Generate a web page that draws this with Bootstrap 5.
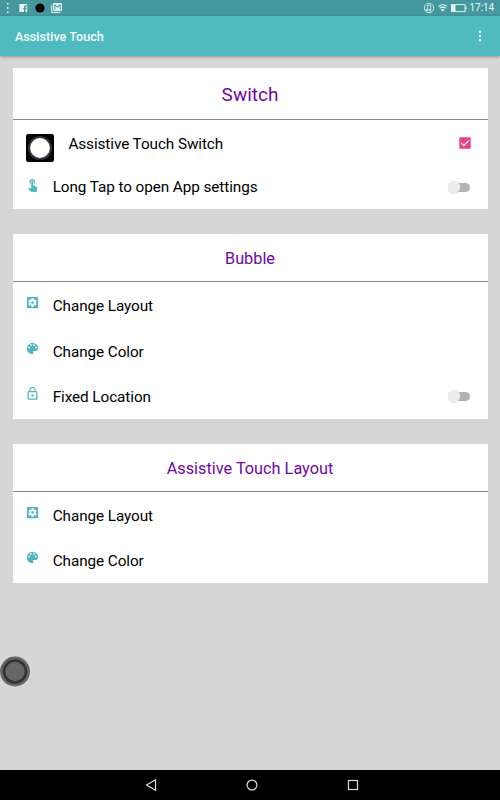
<!DOCTYPE html>
<html lang="en">
<head>
<meta charset="utf-8">
<meta name="viewport" content="width=device-width, initial-scale=1">
<title>Assistive Touch</title>
<link href="https://cdn.jsdelivr.net/npm/bootstrap@5.3.0/dist/css/bootstrap.min.css" rel="stylesheet">
<style>
body{font-family:Roboto,"Liberation Sans",sans-serif;background:#d6d6d6;height:800px;overflow:hidden;color:#111}
svg{display:block;flex:none}
.status{height:16px;background:#45999e;color:#e9f5f5;padding:0 5px 0 4px}
.clock{font-size:10px;line-height:16px;letter-spacing:-.1px;margin-right:1px}
.appbar{height:40px;background:#4fbbc1;color:#f4fbfb;padding:0 15px;box-shadow:0 1px 3px rgba(0,0,0,.3)}
.appbar h1{font-size:12.6px;font-weight:500;line-height:41px}
.panels{padding:12px 12.5px 0;gap:25px}
.panel{background:#fff}
.panel h2{height:48px;line-height:49px;font-size:16.3px;font-weight:400;color:#6f06a6;border-bottom:1px solid #8c8c8c;text-align:center}
.panel h2.big{height:52px;line-height:53px;font-size:19px}
.opt{height:45.5px;padding:0 17px 0 12.3px;font-size:15.3px;letter-spacing:-.08px;line-height:18px;color:#000}
.opt .ic{width:15px;height:15px;margin-top:13px;margin-right:12.9px;fill:#4fb6bc}
.opt .lbl{margin-top:15px}
.opt.first{height:46px}
.opt.first .lbl{margin-top:15px}
.opt.first .app{margin:14px 14.4px 0 1.2px}
.opt.tap{height:43px}
.opt.tap .ic{margin-top:10.5px}
.opt.tap .lbl{margin-top:12.3px}
.tick{margin:17px 0 0}
.tog{margin-top:15px}
.opt.tap .tog{margin-top:13px}
.bubble{left:0;top:656px}
.navkeys{height:30px;background:#000;padding-left:3px}
.navkeys .key{width:101px}
</style>
<script src="https://cdn.jsdelivr.net/npm/bootstrap@5.3.0/dist/js/bootstrap.bundle.min.js"></script>
</head>
<body class="d-flex flex-column position-relative m-0">
<svg width="0" height="0" class="position-absolute">
<symbol id="gear" viewBox="0 0 24 24"><path d="M12 10c-1.1 0-2 .9-2 2s.9 2 2 2 2-.9 2-2-.9-2-2-2zm7-7H5c-1.11 0-2 .9-2 2v14c0 1.1.89 2 2 2h14c1.11 0 2-.9 2-2V5c0-1.1-.89-2-2-2zm-1.75 9c0 .23-.02.46-.05.68l1.48 1.16c.13.11.17.3.08.45l-1.4 2.42c-.09.15-.27.21-.43.15l-1.74-.7c-.36.28-.76.51-1.18.69l-.26 1.85c-.03.17-.18.3-.35.3h-2.8c-.17 0-.32-.13-.35-.29l-.26-1.85c-.43-.18-.82-.41-1.18-.69l-1.74.7c-.16.06-.34 0-.43-.15l-1.4-2.42c-.09-.15-.05-.34.08-.45l1.48-1.16c-.03-.23-.05-.46-.05-.69 0-.23.02-.46.05-.68l-1.48-1.16c-.13-.11-.17-.3-.08-.45l1.4-2.42c.09-.15.27-.21.43-.15l1.74.7c.36-.28.76-.51 1.18-.69l.26-1.85c.03-.17.18-.3.35-.3h2.8c.17 0 .32.13.35.29l.26 1.85c.43.18.82.41 1.18.69l1.74-.7c.16-.06.34 0 .43.15l1.4 2.42c.09.15.05.34-.08.45l-1.48 1.16c.03.23.05.46.05.69z"/></symbol>
<symbol id="palette" viewBox="0 0 24 24"><path d="M12 3c-4.97 0-9 4.03-9 9s4.03 9 9 9c.83 0 1.5-.67 1.5-1.5 0-.39-.15-.74-.39-1.01-.23-.26-.38-.61-.38-.99 0-.83.67-1.5 1.5-1.5H16c2.76 0 5-2.24 5-5 0-4.42-4.03-8-9-8zm-5.5 9c-.83 0-1.5-.67-1.5-1.5S5.67 9 6.5 9 8 9.67 8 10.5 7.33 12 6.5 12zm3-4C8.67 8 8 7.33 8 6.5S8.67 5 9.5 5s1.5.67 1.5 1.5S10.33 8 9.5 8zm5 0c-.83 0-1.5-.67-1.5-1.5S13.67 5 14.5 5s1.5.67 1.5 1.5S15.33 8 14.5 8zm3 4c-.83 0-1.5-.67-1.5-1.5S16.67 9 17.5 9s1.5.67 1.5 1.5-.67 1.5-1.5 1.5z"/></symbol>
<symbol id="lock" viewBox="0 0 24 24"><path d="M12 17c1.1 0 2-.9 2-2s-.9-2-2-2-2 .9-2 2 .9 2 2 2zm6-9h-1V6c0-2.76-2.24-5-5-5S7 3.24 7 6v2H6c-1.1 0-2 .9-2 2v10c0 1.1.9 2 2 2h12c1.1 0 2-.9 2-2V10c0-1.1-.9-2-2-2zM8.9 6c0-1.71 1.39-3.1 3.1-3.1s3.1 1.39 3.1 3.1v2H8.9V6zM18 20H6V10h12v10z"/></symbol>
<symbol id="tap" viewBox="0 0 24 24"><path d="M9 11.24V7.5C9 6.12 10.12 5 11.5 5S14 6.12 14 7.5v3.74c1.21-.81 2-2.18 2-3.74C16 5.01 13.99 3 11.5 3S7 5.01 7 7.5c0 1.56.79 2.93 2 3.74zm9.84 4.63l-4.54-2.26c-.17-.07-.35-.11-.54-.11H13v-6c0-.83-.67-1.5-1.5-1.5S10 6.67 10 7.5v10.74l-3.43-.72c-.08-.01-.15-.03-.24-.03-.31 0-.59.13-.79.33l-.79.8 4.94 4.94c.27.27.65.44 1.06.44h6.79c.75 0 1.33-.55 1.44-1.28l.75-5.27c.01-.07.02-.14.02-.2 0-.62-.38-1.16-.91-1.38z"/></symbol>
<symbol id="toggle" viewBox="0 0 24 16"><rect x="5" y="4" width="18" height="9" rx="4.5" fill="#b2b2b2"/><circle cx="7" cy="8.7" r="6.3" fill="#000" opacity=".1"/><circle cx="7" cy="8.2" r="6.2" fill="#ececec"/></symbol>
</svg>

<div class="status d-flex align-items-center justify-content-between flex-shrink-0">
  <svg width="64" height="16" fill="#e9f5f5">
    <rect x="3" y="3" width="1.5" height="1.5"/><rect x="3" y="7.2" width="1.5" height="1.5"/><rect x="3" y="11.4" width="1.5" height="1.5"/>
    <path d="M16.300 4h5.900a1 1 0 0 1 1 1v6a1 1 0 0 1-1 1h-.8V9.300h1.100V7.900h-1.100v-.7q0-.5.5-.5h.8V5.300h-1.200q-1.500 0-1.500 1.500v1.100h-.9v1.400h.9V12h-3.700a1 1 0 0 1-1-1V5a1 1 0 0 1 1-1z"/>
    <circle cx="36" cy="8" r="4.600" fill="#000"/>
    <path d="M47.700 4.800v7.700h8.600" fill="none" stroke="#e9f5f5" stroke-width="1"/>
    <path fill-rule="evenodd" d="M50 3h7a1 1 0 0 1 1 1v6a1 1 0 0 1-1 1h-7a1 1 0 0 1-1-1V4a1 1 0 0 1 1-1zm.3 1.300v5.500h1V6l2.200 1.800L55.700 6v3.800h1V4.300h-.6L53.500 6.400 50.900 4.300z"/>
  </svg>
  <div class="d-flex align-items-center">
    <svg width="48" height="16" fill="none" stroke="#e9f5f5">
      <circle cx="7" cy="8" r="4.700" stroke-width=".8"/><path d="M5.600 9.500V5.200h3.200v4.300M3.800 9.600h1.800v1.200H4.200zM7 9.600h1.800v1.200H7z" stroke-width=".8"/>
      <path d="M16.300 6.400q4.300-3.300 8.800 0M17.800 8.200q2.900-2.200 5.800 0" stroke-width="1.100"/><path d="M18.800 9.600q1.900-1.300 3.800 0l-1.900 2.200z" fill="#e9f5f5" stroke="none"/>
      <rect x="29.500" y="4.600" width="13.500" height="7" stroke-width=".9"/><path d="M30 5h3.500v6.200H30zM43.300 6.600h1.200v3h-1.200z" fill="#e9f5f5" stroke="none"/>
    </svg>
    <span class="clock">17:14</span>
  </div>
</div>

<header class="appbar d-flex align-items-center justify-content-between flex-shrink-0">
  <h1 class="m-0">Assistive Touch</h1>
  <svg width="10" height="12" fill="#f4fbfb"><circle cx="5" cy="2" r="1.200"/><circle cx="5" cy="6" r="1.200"/><circle cx="5" cy="10" r="1.200"/></svg>
</header>

<main class="panels d-flex flex-column flex-grow-1">
  <section class="panel">
    <h2 class="big m-0">Switch</h2>
    <div class="opt first d-flex align-items-start">
      <svg class="app" width="28" height="28"><rect width="28" height="28" rx="2" fill="#000"/><circle cx="14" cy="14" r="11" fill="#fff" stroke="#30343c" stroke-width="2.200"/></svg>
      <span class="lbl">Assistive Touch Switch</span>
      <svg class="tick ms-auto" width="12" height="12"><rect x=".3" y=".3" width="11.400" height="11.400" rx="1" fill="#ea4289"/><path d="M2.300 6.100l2.500 2.500 5-5.200" fill="none" stroke="#fff" stroke-width="1.200"/></svg>
    </div>
    <div class="opt tap d-flex align-items-start">
      <svg class="ic"><use href="#tap"/></svg><span class="lbl">Long Tap to open App settings</span>
      <svg class="tog ms-auto" width="24" height="16"><use href="#toggle"/></svg>
    </div>
  </section>
  <section class="panel">
    <h2 class="m-0">Bubble</h2>
    <div class="opt d-flex align-items-start"><svg class="ic"><use href="#gear"/></svg><span class="lbl">Change Layout</span></div>
    <div class="opt d-flex align-items-start"><svg class="ic"><use href="#palette"/></svg><span class="lbl">Change Color</span></div>
    <div class="opt d-flex align-items-start"><svg class="ic"><use href="#lock"/></svg><span class="lbl">Fixed Location</span>
      <svg class="tog ms-auto" width="24" height="16"><use href="#toggle"/></svg></div>
  </section>
  <section class="panel">
    <h2 class="m-0">Assistive Touch Layout</h2>
    <div class="opt d-flex align-items-start"><svg class="ic"><use href="#gear"/></svg><span class="lbl">Change Layout</span></div>
    <div class="opt d-flex align-items-start"><svg class="ic"><use href="#palette"/></svg><span class="lbl">Change Color</span></div>
  </section>
</main>

<svg class="bubble position-absolute" width="31" height="31"><circle cx="15" cy="15.500" r="15" fill="#666"/><circle cx="15" cy="15.500" r="11" fill="#666" stroke="#333" stroke-width="2.600"/></svg>

<nav class="navkeys d-flex justify-content-center align-items-center flex-shrink-0">
  <div class="key d-flex justify-content-center"><svg width="14" height="14" fill="none" stroke="#ddd" stroke-width="1.200"><path d="M11.500 1.800v10.400L2.500 7z"/></svg></div>
  <div class="key d-flex justify-content-center"><svg width="14" height="14" fill="none" stroke="#ddd" stroke-width="1.200"><circle cx="7" cy="7" r="4.900"/></svg></div>
  <div class="key d-flex justify-content-center"><svg width="14" height="14" fill="none" stroke="#ddd" stroke-width="1.200"><rect x="2.500" y="2.500" width="9" height="9"/></svg></div>
</nav>
</body>
</html>
